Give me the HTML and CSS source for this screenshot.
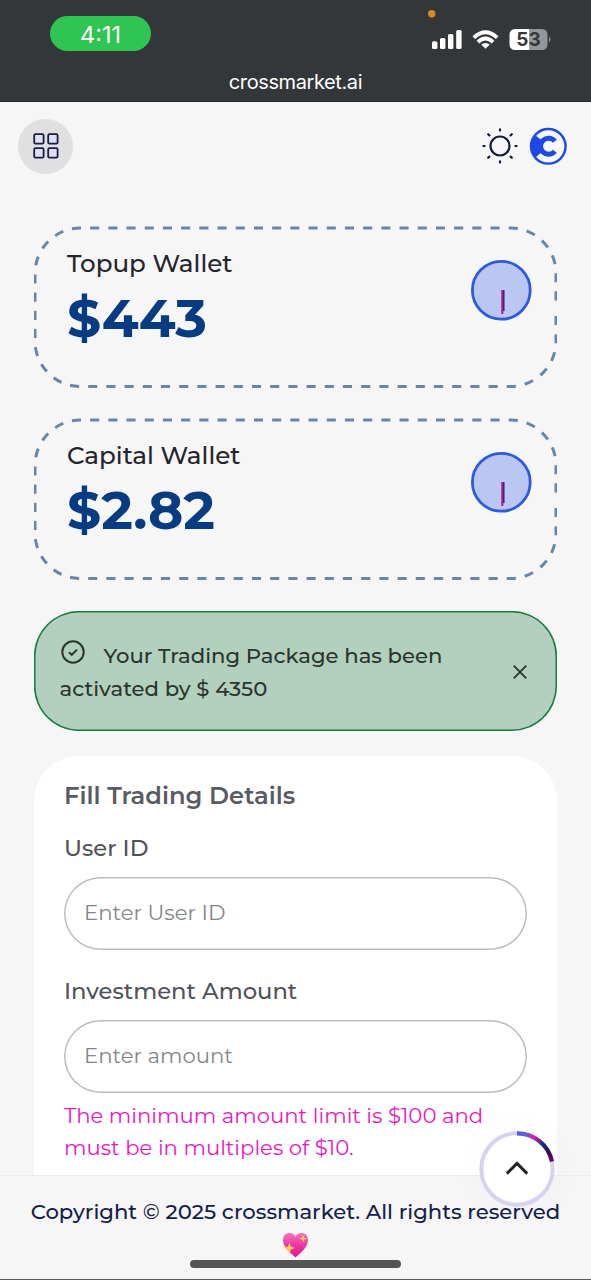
FILE: index.html
```html
<!DOCTYPE html>
<html lang="en">
<head>
<meta charset="utf-8">
<title>crossmarket.ai</title>
<link rel="stylesheet" href="styles.css">
</head>
<body>
<div class="screen">
  <div class="status">
    <div class="status-row">
      <span class="time">4:11</span>
      <div class="indicators">
        <svg width="130" height="50" viewBox="0 0 130 50">
          <circle cx="11.700" cy="9.800" r="3.700" fill="#d98a22"/>
          <g fill="#fff">
            <rect x="12" y="37.300" width="5.400" height="7.700" rx="1.600"/>
            <rect x="20" y="34" width="5.400" height="11" rx="1.600"/>
            <rect x="28" y="30" width="5.400" height="15" rx="1.600"/>
            <rect x="36.200" y="26" width="5.400" height="19" rx="1.600"/>
            <path d="M65.500 44.800L61.200 40.600Q65.500 37.200 69.800 40.600Z"/>
          </g>
          <g fill="none" stroke="#fff" stroke-width="3.800">
            <path d="M53.800 33.600Q65.500 23 77.200 33.600"/>
            <path d="M57.900 38Q65.500 31 73.100 38"/>
          </g>
          <path d="M95 25h14.600v21H95a5.500 5.500 0 0 1-5.500-5.500v-10a5.500 5.500 0 0 1 5.500-5.500z" fill="#fff"/>
          <path d="M109.500 25h12.500a5.500 5.500 0 0 1 5.500 5.500v10a5.500 5.500 0 0 1-5.500 5.500h-12.500z" fill="#949697"/>
          <path d="M129 32.500q3 2.800 0 6z" fill="#949697"/>
        </svg>
        <span class="battery">53</span>
      </div>
    </div>
    <div class="address">crossmarket.ai</div>
  </div>

  <header class="topbar">
    <button class="menu-btn" aria-label="Menu">
      <svg width="26" height="26" viewBox="0 0 26 26" fill="#dfe0ee" stroke="#1a1c45" stroke-width="1.800">
        <rect x="1.200" y="1.200" width="9.400" height="9.400" rx="1.200"/><rect x="15.200" y="1.200" width="9.400" height="9.400" rx="1.200"/>
        <rect x="1.200" y="15.200" width="9.400" height="9.400" rx="1.200"/><rect x="15.200" y="15.200" width="9.400" height="9.400" rx="1.200"/>
      </svg>
    </button>
    <div class="tools">
      <svg width="36" height="36" viewBox="0 0 36 36" fill="none" stroke="#151a40" stroke-width="2.200" stroke-linecap="round">
        <circle cx="18" cy="18" r="9.500"/>
        <path d="M18 1.400v1.200M18 33.400v1.200M1.400 18h1.200M33.400 18h1.200M6.200 6.200l1.200 1.200M28.600 28.600l1.200 1.200M6.200 29.800l1.200-1.200M28.600 7.400l1.200-1.200"/>
      </svg>
      <svg width="38" height="38" viewBox="0 0 38 38">
        <circle cx="19.300" cy="19.300" r="17.300" fill="#f6f7fb" stroke="#1a49e8" stroke-width="2.400"/>
        <path d="M2.500 13L7 8.800L13 13.500V25L7 30L2.500 25.500Z" fill="#1a49e8"/>
        <path d="M25.800 14.300A8 8 0 1 0 25.800 24.300" fill="none" stroke="#1a49e8" stroke-width="5"/>
      </svg>
    </div>
  </header>

  <main class="content">
    <section class="wallet">
      <svg class="outline" width="523" height="162" viewBox="0 0 523 162"><path d="M522 90V115.500A45.500 45.500 0 0 1 476.500 160.500H46.500A45.500 45.500 0 0 1 1 115.500V47.500A45.500 45.500 0 0 1 46.500 2H476.500A45.500 45.500 0 0 1 522 47.500V75"/></svg>
      <div>
        <h2 class="wallet-name">Topup Wallet</h2>
        <div class="amount">$443</div>
      </div>
      <svg class="dial" width="62" height="62" viewBox="0 0 62 62"><circle cx="31.300" cy="31.300" r="28.900" fill="#bac7f3" stroke="#2d5bdc" stroke-width="2.800"/><path d="M32.300 31V55" stroke="#b5128f" stroke-width="2"/><path d="M33.800 31V52" stroke="#331b70" stroke-width="1.400"/></svg>
    </section>
    <section class="wallet">
      <svg class="outline" width="523" height="162" viewBox="0 0 523 162"><path d="M522 90V115.500A45.500 45.500 0 0 1 476.500 160.500H46.500A45.500 45.500 0 0 1 1 115.500V47.500A45.500 45.500 0 0 1 46.500 2H476.500A45.500 45.500 0 0 1 522 47.500V75"/></svg>
      <div>
        <h2 class="wallet-name">Capital Wallet</h2>
        <div class="amount">$2.82</div>
      </div>
      <svg class="dial" width="62" height="62" viewBox="0 0 62 62"><circle cx="31.300" cy="31.300" r="28.900" fill="#bac7f3" stroke="#2d5bdc" stroke-width="2.800"/><path d="M32.300 31V55" stroke="#b5128f" stroke-width="2"/><path d="M33.800 31V52" stroke="#331b70" stroke-width="1.400"/></svg>
    </section>

    <div class="alert">
      <p class="alert-text"><svg class="check" width="24" height="24" viewBox="0 0 24 24" fill="none" stroke="#2b352e" stroke-width="2"><circle cx="12" cy="12" r="10.700"/><path d="M8 12.200l2.800 2.600 5.200-5.200"/></svg>Your Trading Package has been<br>activated by $ 4350</p>
      <svg class="close" width="14" height="14" viewBox="0 0 14 14" fill="none" stroke="#29342c" stroke-width="1.800"><path d="M.7.7l12.600 12.600M13.300.7L.7 13.300"/></svg>
    </div>

    <form class="form">
      <h3 class="form-title">Fill Trading Details</h3>
      <label class="label user" for="uid">User ID</label>
      <input class="field" id="uid" placeholder="Enter User ID">
      <label class="label invest" for="amt">Investment Amount</label>
      <input class="field" id="amt" placeholder="Enter amount">
      <p class="hint">The minimum amount limit is $100 and<br>must be in multiples of $10.</p>
    </form>
  </main>

  <div class="footer-bg"></div>

  <button class="to-top" aria-label="Back to top">
    <svg width="76" height="76" viewBox="0 0 76 76" fill="none">
      <defs><linearGradient id="arc" x1="38" y1="0" x2="74" y2="30" gradientUnits="userSpaceOnUse"><stop offset="0" stop-color="#3d63ee"/><stop offset=".18" stop-color="#665bdc"/><stop offset=".38" stop-color="#d81bb0"/><stop offset=".6" stop-color="#162c83"/><stop offset=".82" stop-color="#2f0c58"/><stop offset="1" stop-color="#700660"/></linearGradient></defs>
      <circle cx="38" cy="38" r="35.700" fill="#fff" stroke="#d8d2f1" stroke-width="4"/>
      <path d="M38 2.300A35.700 35.700 0 0 1 73 30.500" stroke="url(#arc)" stroke-width="4.200"/>
      <path d="M28.800 41.600l9.200-9.200 9.200 9.200" stroke="#202225" stroke-width="2.900" stroke-linecap="square"/>
    </svg>
  </button>

  <footer class="footer">
    <div class="copy">Copyright © 2025 crossmarket. All rights reserved</div>
    <svg class="heart" width="27" height="26" viewBox="0 0 27 26">
      <defs><linearGradient id="hg" x1="0" y1="0" x2="0" y2="1"><stop offset="0" stop-color="#f873b8"/><stop offset=".5" stop-color="#ed36a4"/><stop offset="1" stop-color="#dc168d"/></linearGradient></defs>
      <path d="M13.500 25.500C9 21 1 15.500 1 8C1 3.500 4 1 7.500 1C10.500 1 12.500 2.500 13.500 5C14.500 2.500 16.500 1 19.500 1C23 1 26 3.500 26 8C26 15.500 18 21 13.500 25.500Z" fill="url(#hg)"/>
      <path d="M7.500 10.500L8.800 14.500L13 16L8.800 17.500L7.500 21.500L5.800 17.500L1.500 15.500L6 14.500ZM21 2.500L22 5.500L25.500 6.500L22.300 7.500L21.500 10.500L20.200 7.500L17.500 6.500L20.200 5.500Z" fill="#ffd34d"/>
    </svg>
    <div class="home"></div>
  </footer>
</div>
</body>
</html>
```
FILE: styles.css
```css
* { box-sizing: border-box; }
body { margin: 0; }
.screen {
  position: relative;
  width: 591px;
  height: 1280px;
  overflow: hidden;
  background: #f6f6f6;
  font-family: Montserrat, Inter, "Open Sans", sans-serif;
}
h2, h3, p { margin: 0; }
svg { display: block; }
button { border: 0; padding: 0; }
.status {
  height: 102px;
  background: #34373a;
  color: #fff;
  font-family: Inter, "Liberation Sans", sans-serif;
  border-bottom: 1px solid #242629;
}
.status-row { display: flex; justify-content: space-between; height: 68px; padding: 0 41px 0 50px; }
.time {
  width: 101px;
  height: 35px;
  margin-top: 16px;
  border-radius: 18px;
  background: #30c453;
  text-align: center;
  font-size: 23.500px;
  font-weight: 400;
  line-height: 37px;
}
.indicators { position: relative; width: 130px; height: 50px; margin-top: 4px; }
.indicators svg { overflow: visible; }
.battery {
  position: absolute;
  left: 89px;
  top: 24px;
  width: 39px;
  text-align: center;
  font: 700 19px/23px Inter, sans-serif;
  color: #34373a;
}
.address { text-align: center; font-size: 20px; line-height: 28px; letter-spacing: -.4px; }
.topbar {
  display: flex;
  justify-content: space-between;
  align-items: center;
  height: 88px;
  padding: 0 24px 0 18px;
}
.menu-btn {
  display: grid;
  place-items: center;
  width: 55px;
  height: 55px;
  border-radius: 50%;
  background: #e0e0e2;
}
.tools { display: flex; align-items: center; gap: 11px; }
.content { padding: 36px 34px 0; }
.wallet {
  position: relative;
  display: flex;
  justify-content: space-between;
  height: 162px;
  margin-bottom: 30.300px;
  padding: 20px 25px 0 33px;
}
.outline { position: absolute; left: 0; top: 0; }
.outline path { fill: none; stroke: #6686ac; stroke-width: 3; stroke-dasharray: 9.100 9.100; }
.wallet-name { font-size: 24.600px; line-height: 35px; font-weight: 500; color: #25242e; }
.amount { font-size: 53.600px; line-height: 64px; font-weight: 700; color: #073b82; margin-top: 5px; }
.dial { margin-top: 13px; }
.alert {
  display: flex;
  justify-content: space-between;
  align-items: center;
  height: 120px;
  margin-top: 31px;
  padding: 2px 30px 0 25.500px;
  border-radius: 45px;
  background: #b2d0bd;
  box-shadow: inset 0 0 0 1.500px #197b3d;
}
.alert-text { font-size: 21.200px; line-height: 33px; font-weight: 500; color: #29352d; white-space: nowrap; }
.check { display: inline-block; margin: 0 19px 0 1px; vertical-align: -1px; }
.form {
  margin-top: 24.500px;
  height: 480px;
  padding: 24px 30px 0;
  border-radius: 45px 45px 0 0;
  background: #fff;
}
.form-title { font-size: 24.240px; line-height: 32px; font-weight: 600; color: #5a5b62; }
.label { display: block; font-size: 22.700px; line-height: 30px; font-weight: 500; color: #515158; }
.user { margin-top: 21px; }
.invest { margin-top: 26px; }
.field {
  display: block;
  width: 463px;
  height: 73px;
  margin-top: 14px;
  padding: 0 20px 2px;
  border: 0;
  border-radius: 37px;
  background: #fff;
  box-shadow: inset 0 0 0 1.500px #bdbdbd;
  font: 400 21.200px Montserrat, Inter, sans-serif;
}
.field::placeholder { color: #848587; opacity: 1; }
.hint { margin-top: 6px; font-size: 21.200px; line-height: 32px; color: #e617c3; white-space: nowrap; }
.footer-bg, .footer { position: absolute; left: 0; right: 0; bottom: 0; height: 105px; }
.footer-bg {
  border-top: 1px solid #ededee;
  border-bottom: 1px solid #58595b;
  background: #f6f6f6;
}
.footer {
  display: flex;
  flex-direction: column;
  align-items: center;
  padding-top: 20px;
  pointer-events: none;
}
.copy { font-size: 21.200px; line-height: 32px; font-weight: 500; color: #15204a; white-space: nowrap; }
.heart { margin-top: 5px; }
.home { width: 211px; height: 8px; margin-top: 2px; flex: none; border-radius: 4px; background: #555; }
.to-top {
  position: absolute;
  left: 478.500px;
  top: 1131px;
  width: 76px;
  height: 76px;
  border-radius: 50%;
  background: transparent;
  box-shadow: 0 0 36px rgba(0, 0, 0, .03);
}
```
